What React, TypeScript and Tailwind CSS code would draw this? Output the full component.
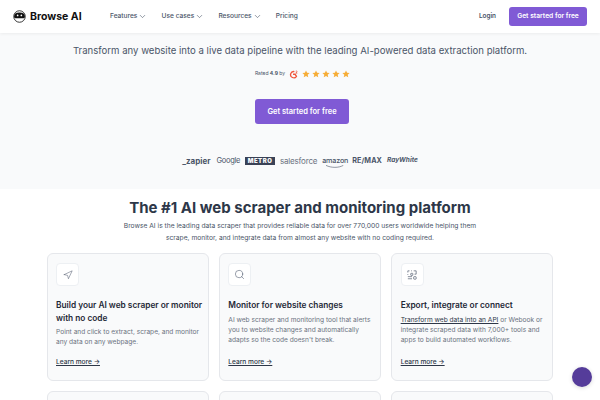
import { ChevronDown, Navigation, Search } from "lucide-react";

type Feature = {
  title: string;
  body: React.ReactNode;
  icon: React.ReactNode;
};

const features: Feature[] = [
  {
    title: "Build your AI web scraper or monitor with no code",
    body: "Point and click to extract, scrape, and monitor any data on any webpage.",
    icon: <Navigation className="size-[10px]" strokeWidth={1.2} />,
  },
  {
    title: "Monitor for website changes",
    body: "AI web scraper and monitoring tool that alerts you to website changes and automatically adapts so the code doesn't break.",
    icon: <Search className="size-[11px]" strokeWidth={1.2} />,
  },
  {
    title: "Export, integrate or connect",
    body: (
      <>
        <span className="text-[#2d3748] underline">Transform web data into an API</span> or Webook or
        integrate scraped data with 7,000+ tools and apps to build automated workflows.
      </>
    ),
    icon: <ExportIcon />,
  },
];

function ExportIcon() {
  return (
    <svg viewBox="0 0 12 12" className="size-[10px]" fill="none" stroke="currentColor" strokeWidth="0.8">
      <path d="M1 3V1h2M5 1h1M1 5v1" />
      <rect x="4.5" y="4" width="2.5" height="2.5" rx="0.5" />
      <path d="M1 8h5M1 10.500h5" />
      <rect x="8" y="8" width="3" height="3" rx="0.6" />
      <path d="M8 1h3v4H9" />
    </svg>
  );
}

function Logo() {
  return (
    <svg viewBox="0 0 14 14" className="size-[13px]">
      <circle cx="7" cy="7" r="6.2" fill="#fff" stroke="#111" strokeWidth="0.9" />
      <path d="M1.200 7C1.200 4 3 2.800 7 2.800S12.800 4 12.800 7c0 1.500-1 2-2.300 2H3.500C2.200 9 1.200 8.500 1.200 7Z" fill="#111" />
      <circle cx="5" cy="5.800" r="0.9" fill="#fff" />
      <circle cx="9" cy="5.800" r="0.9" fill="#fff" />
    </svg>
  );
}

function Star() {
  return (
    <svg viewBox="0 0 20 20" className="size-[8px]" fill="#f6ad37">
      <path d="M10 1l2.700 6 6.300.6-4.800 4.200 1.500 6.400L10 14.800l-5.700 3.400 1.500-6.400L1 7.600 7.300 7z" />
    </svg>
  );
}

function NavItem({ label }: { label: string }) {
  return (
    <span className="flex items-center gap-[1px] text-[6.600px] font-medium text-[#4a5568]">
      {label}
      <ChevronDown className="size-[9px]" strokeWidth={1.600} />
    </span>
  );
}

function Logos() {
  return (
    <div className="mt-[29px] flex h-[16px] items-center gap-[5px] text-[#4a5568]">
      <span className="mr-px text-[8px] font-bold">_zapier</span>
      <span className="text-[7.500px] tracking-[-0.3px]">Google</span>
      <span className="flex h-[8px] w-[30px] items-center justify-center bg-[#3a4256] text-[6px] leading-none font-black tracking-[0.5px] text-[#f9fafb]">
        METRO
      </span>
      <span className="text-[8px] tracking-[-0.2px] text-[#6b7280]">salesforce</span>
      <span className="relative text-[7.200px] font-medium tracking-[-0.2px]">
        amazon
        <svg viewBox="0 0 26 4" className="absolute top-[9px] left-px h-[3px] w-[24px]" fill="none" stroke="#4a5568" strokeWidth="0.8">
          <path d="M1 .5C8 4 18 4 24 .5" />
        </svg>
      </span>
      <span className="-ml-px text-[7.200px] font-bold tracking-[0.1px]">RE/MAX</span>
      <span className="text-[6.500px] font-bold italic">RayWhite</span>
    </div>
  );
}

function Card({ feature }: { feature: Feature }) {
  return (
    <div className="flex h-[128px] flex-col rounded-[6px] border border-[#e5e7eb] bg-[#f9fafb] pt-[9px] pr-[5px] pl-[8.500px]">
      <div className="flex size-[23px] items-center justify-center rounded-[4px] border border-[#edf0f3] bg-white text-[#4a5568]">
        {feature.icon}
      </div>
      <h3 className="mt-[13px] text-[8.300px] leading-[12.500px] font-semibold text-[#1f2937]">{feature.title}</h3>
      <p className="mt-[3px] text-[6.600px] leading-[10px] text-[#6b7280]">{feature.body}</p>
      <a className="mt-auto mb-[13px] text-[6.600px] leading-[10px] font-medium text-[#2d3748] underline">
        Learn more →
      </a>
    </div>
  );
}

export default function App() {
  return (
    <div className="relative h-[400px] w-[600px] overflow-hidden bg-white font-['Inter',sans-serif]">
      <header className="relative z-10 flex h-[33px] items-center bg-white pr-[13px] pl-[13px] shadow-[0_1px_3px_rgba(0,0,0,0.06)]">
        <div className="flex w-[97px] items-center gap-[4px]">
          <Logo />
          <span className="text-[10.500px] font-bold text-[#111]">Browse AI</span>
        </div>
        <nav className="flex items-center gap-[14.200px]">
          <NavItem label="Features" />
          <NavItem label="Use cases" />
          <NavItem label="Resources" />
          <span className="text-[6.600px] font-medium text-[#4a5568]">Pricing</span>
        </nav>
        <span className="mr-[13px] ml-auto text-[6.400px] font-semibold text-[#4a5568]">Login</span>
        <button className="h-[19px] w-[78px] rounded-[3px] bg-[#805ad5] text-[6.700px] font-semibold text-white">
          Get started for free
        </button>
      </header>

      <section className="flex h-[156px] flex-col items-center bg-[#f9fafb] pt-[10px]">
        <p className="text-[9.600px] leading-[15px] text-[#4a5568]">
          Transform any website into a live data pipeline with the leading AI-powered data extraction platform.
        </p>
        <div className="mt-[11px] ml-[5px] flex h-[10px] items-center gap-[3px] text-[5px] text-[#4a5568]">
          <span>
            Rated <b>4.9</b> by
          </span>
          <svg viewBox="0 0 20 20" className="ml-[1px] size-[9px]" fill="none" stroke="#f0553a" strokeWidth="3">
            <path d="M12 3.500A7 7 0 1 0 16.500 14l-3-4.500H9" />
            <path d="M15 2.500c2-1 3.500.5 2.500 2L15 7h3.500" strokeWidth="1.800" />
          </svg>
          <span className="ml-[1px] flex gap-[2px]">
            <Star />
            <Star />
            <Star />
            <Star />
            <Star />
          </span>
        </div>
        <button className="mt-[20px] ml-[4px] h-[25px] w-[94px] shrink-0 rounded-[3px] bg-[#805ad5] text-[7.500px] font-semibold text-white">
          Get started for free
        </button>
        <Logos />
      </section>

      <section className="flex flex-col items-center">
        <h2 className="mt-[9px] text-[15px] leading-[20px] font-bold text-[#2d3748]">
          The #1 AI web scraper and monitoring platform
        </h2>
        <p className="mt-[2px] w-[370px] text-center text-[6.700px] leading-[12px] text-[#4a5568]">
          Browse AI is the leading data scraper that provides reliable data for over 770,000 users worldwide helping them
          scrape, monitor, and integrate data from almost any website with no coding required.
        </p>
        <div className="mt-[9px] grid w-[507px] grid-cols-3 gap-x-[10px] gap-y-[10px]">
          {features.map((f) => (
            <Card key={f.title} feature={f} />
          ))}
          <div className="h-[40px] rounded-[6px] border border-[#e5e7eb] bg-[#f9fafb]" />
          <div className="h-[40px] rounded-[6px] border border-[#e5e7eb] bg-[#f9fafb]" />
          <div className="h-[40px] rounded-[6px] border border-[#e5e7eb] bg-[#f9fafb]" />
        </div>
      </section>

      <div className="absolute right-[8px] bottom-[13px] size-[20px] rounded-full bg-[#553c9a] shadow-[0_1px_4px_rgba(0,0,0,0.15)]" />
    </div>
  );
}
